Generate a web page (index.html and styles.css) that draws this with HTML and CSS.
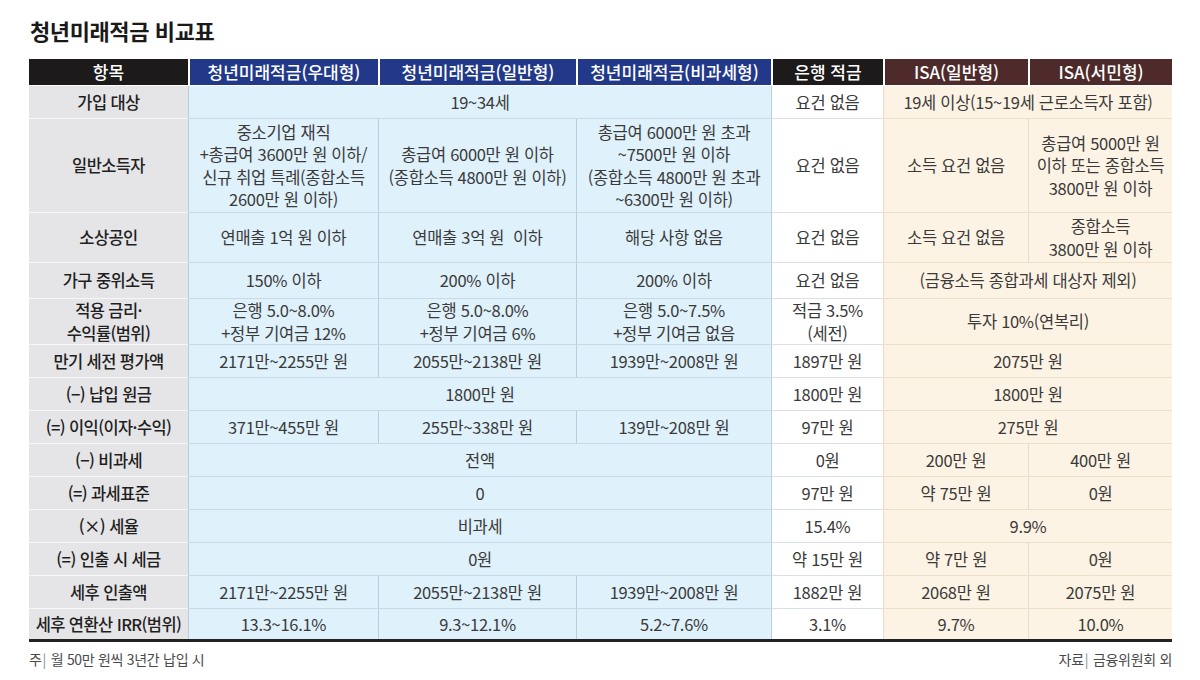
FILE: index.html
```html
<!DOCTYPE html>
<html lang="ko">
<head>
<meta charset="utf-8">
<title>청년미래적금 비교표</title>
<link rel="stylesheet" href="styles.css">
</head>
<body>
<div class="page">
  <h1 class="title">청년미래적금 비교표</h1>
  <div class="table">
    <div class="c hd hd-k">항목</div>
    <div class="c hd hd-n">청년미래적금(우대형)</div>
    <div class="c hd hd-n">청년미래적금(일반형)</div>
    <div class="c hd hd-n">청년미래적금(비과세형)</div>
    <div class="c hd hd-k">은행 적금</div>
    <div class="c hd hd-m">ISA(일반형)</div>
    <div class="c hd hd-m">ISA(서민형)</div>

    <div class="c lbl">가입 대상</div>
    <div class="c b s3">19~34세</div>
    <div class="c w">요건 없음</div>
    <div class="c y s2">19세 이상(15~19세 근로소득자 포함)</div>

    <div class="c lbl">일반소득자</div>
    <div class="c b">중소기업 재직<br>+총급여 3600만 원 이하/<br>신규 취업 특례(종합소득<br>2600만 원 이하)</div>
    <div class="c b">총급여 6000만 원 이하<br>(종합소득 4800만 원 이하)</div>
    <div class="c b">총급여 6000만 원 초과<br>~7500만 원 이하<br>(종합소득 4800만 원 초과<br>~6300만 원 이하)</div>
    <div class="c w">요건 없음</div>
    <div class="c y">소득 요건 없음</div>
    <div class="c y">총급여 5000만 원<br>이하 또는 종합소득<br>3800만 원 이하</div>

    <div class="c lbl">소상공인</div>
    <div class="c b">연매출 1억 원 이하</div>
    <div class="c b">연매출 3억 원&nbsp; 이하</div>
    <div class="c b">해당 사항 없음</div>
    <div class="c w">요건 없음</div>
    <div class="c y">소득 요건 없음</div>
    <div class="c y">종합소득<br>3800만 원 이하</div>

    <div class="c lbl">가구 중위소득</div>
    <div class="c b">150% 이하</div>
    <div class="c b">200% 이하</div>
    <div class="c b">200% 이하</div>
    <div class="c w">요건 없음</div>
    <div class="c y s2">(금융소득 종합과세 대상자 제외)</div>

    <div class="c lbl">적용 금리·<br>수익률(범위)</div>
    <div class="c b">은행 5.0~8.0%<br>+정부 기여금 12%</div>
    <div class="c b">은행 5.0~8.0%<br>+정부 기여금 6%</div>
    <div class="c b">은행 5.0~7.5%<br>+정부 기여금 없음</div>
    <div class="c w">적금 3.5%<br>(세전)</div>
    <div class="c y s2">투자 10%(연복리)</div>

    <div class="c lbl">만기 세전 평가액</div>
    <div class="c b">2171만~2255만 원</div>
    <div class="c b">2055만~2138만 원</div>
    <div class="c b">1939만~2008만 원</div>
    <div class="c w">1897만 원</div>
    <div class="c y s2">2075만 원</div>

    <div class="c lbl">(−) 납입 원금</div>
    <div class="c b s3">1800만 원</div>
    <div class="c w">1800만 원</div>
    <div class="c y s2">1800만 원</div>

    <div class="c lbl">(=) 이익(이자·수익)</div>
    <div class="c b">371만~455만 원</div>
    <div class="c b">255만~338만 원</div>
    <div class="c b">139만~208만 원</div>
    <div class="c w">97만 원</div>
    <div class="c y s2">275만 원</div>

    <div class="c lbl">(−) 비과세</div>
    <div class="c b s3">전액</div>
    <div class="c w">0원</div>
    <div class="c y">200만 원</div>
    <div class="c y">400만 원</div>

    <div class="c lbl">(=) 과세표준</div>
    <div class="c b s3">0</div>
    <div class="c w">97만 원</div>
    <div class="c y">약 75만 원</div>
    <div class="c y">0원</div>

    <div class="c lbl">(×) 세율</div>
    <div class="c b s3">비과세</div>
    <div class="c w">15.4%</div>
    <div class="c y s2">9.9%</div>

    <div class="c lbl">(=) 인출 시 세금</div>
    <div class="c b s3">0원</div>
    <div class="c w">약 15만 원</div>
    <div class="c y">약 7만 원</div>
    <div class="c y">0원</div>

    <div class="c lbl">세후 인출액</div>
    <div class="c b">2171만~2255만 원</div>
    <div class="c b">2055만~2138만 원</div>
    <div class="c b">1939만~2008만 원</div>
    <div class="c w">1882만 원</div>
    <div class="c y">2068만 원</div>
    <div class="c y">2075만 원</div>

    <div class="c lbl last">세후 연환산 IRR(범위)</div>
    <div class="c b last">13.3~16.1%</div>
    <div class="c b last">9.3~12.1%</div>
    <div class="c b last">5.2~7.6%</div>
    <div class="c w last">3.1%</div>
    <div class="c y last">9.7%</div>
    <div class="c y last">10.0%</div>
  </div>
  <div class="foot">
    <span>주<span class="bar">|</span> 월 50만 원씩 3년간 납입 시</span>
    <span>자료<span class="bar">|</span> 금융위원회 외</span>
  </div>
</div>
</body>
</html>
```

FILE: styles.css
```css
* { box-sizing: border-box; }
html, body { margin: 0; padding: 0; background: #ffffff; }
body {
  font-family: "Noto Sans CJK KR", "Noto Sans", sans-serif;
  color: #333333;
}
.page {
  width: 1200px;
  height: 680px;
  padding: 17px 28px 0 29px;
}
.title {
  margin: 0 0 15px 1px;
  font-size: 22px;
  line-height: 27px;
  font-weight: 700;
  letter-spacing: -0.4px;
  color: #1a1a1a;
}
.table {
  display: grid;
  width: 1143px;
  grid-template-columns: 159px 190px 198px 195px 112px 145px 144px;
  grid-template-rows: 27px 33px 94px 50px 36px 46px 33px 33px 33px 33px 33px 33px 33px 33px 30px;
  border-bottom: 3px solid #232323;
}
.c {
  display: flex;
  align-items: center;
  justify-content: center;
  text-align: center;
  font-size: 16.5px;
  line-height: 22.5px;
  letter-spacing: -0.3px;
  font-weight: 400;
  color: #3a3a3a;
  white-space: nowrap;
}
.s2 { grid-column: span 2; }
.s3 { grid-column: span 3; }
.hd {
  color: #ffffff;
  font-size: 17px;
  font-weight: 500;
  letter-spacing: 0;
  border-left: 2px solid #ffffff;
  border-bottom: 1px solid #ffffff;
}
.hd:first-child { border-left: none; }
.hd-k { background: #1d1a1b; }
.hd-n { background: #22398a; }
.hd-m { background: #4e2a2b; }
.lbl {
  background: #e5e5e7;
  color: #1f1f1f;
  font-size: 16.5px;
  font-weight: 500;
  letter-spacing: -0.6px;
  border-bottom: 1px solid #f6f6f6;
}
.b {
  background: #dff1fb;
  border-left: 1px solid #b9cedc;
  border-bottom: 1px solid #c9dae6;
}
.w {
  background: #ffffff;
  border-left: 1px solid #b9cedc;
  border-bottom: 1px solid #d9dfe4;
}
.y {
  background: #fdf3e4;
  border-left: 1px solid #e6dccd;
  border-bottom: 1px solid #ecdfcc;
}
.last { border-bottom: none; }
.foot {
  width: 1143px;
  margin-top: 8px;
  display: flex;
  justify-content: space-between;
  font-size: 14px;
  line-height: 18px;
  color: #4a4a4a;
  letter-spacing: -0.3px;
}
.bar {
  color: #8a8a8a;
  margin: 0 1px 0 1px;
}
```
